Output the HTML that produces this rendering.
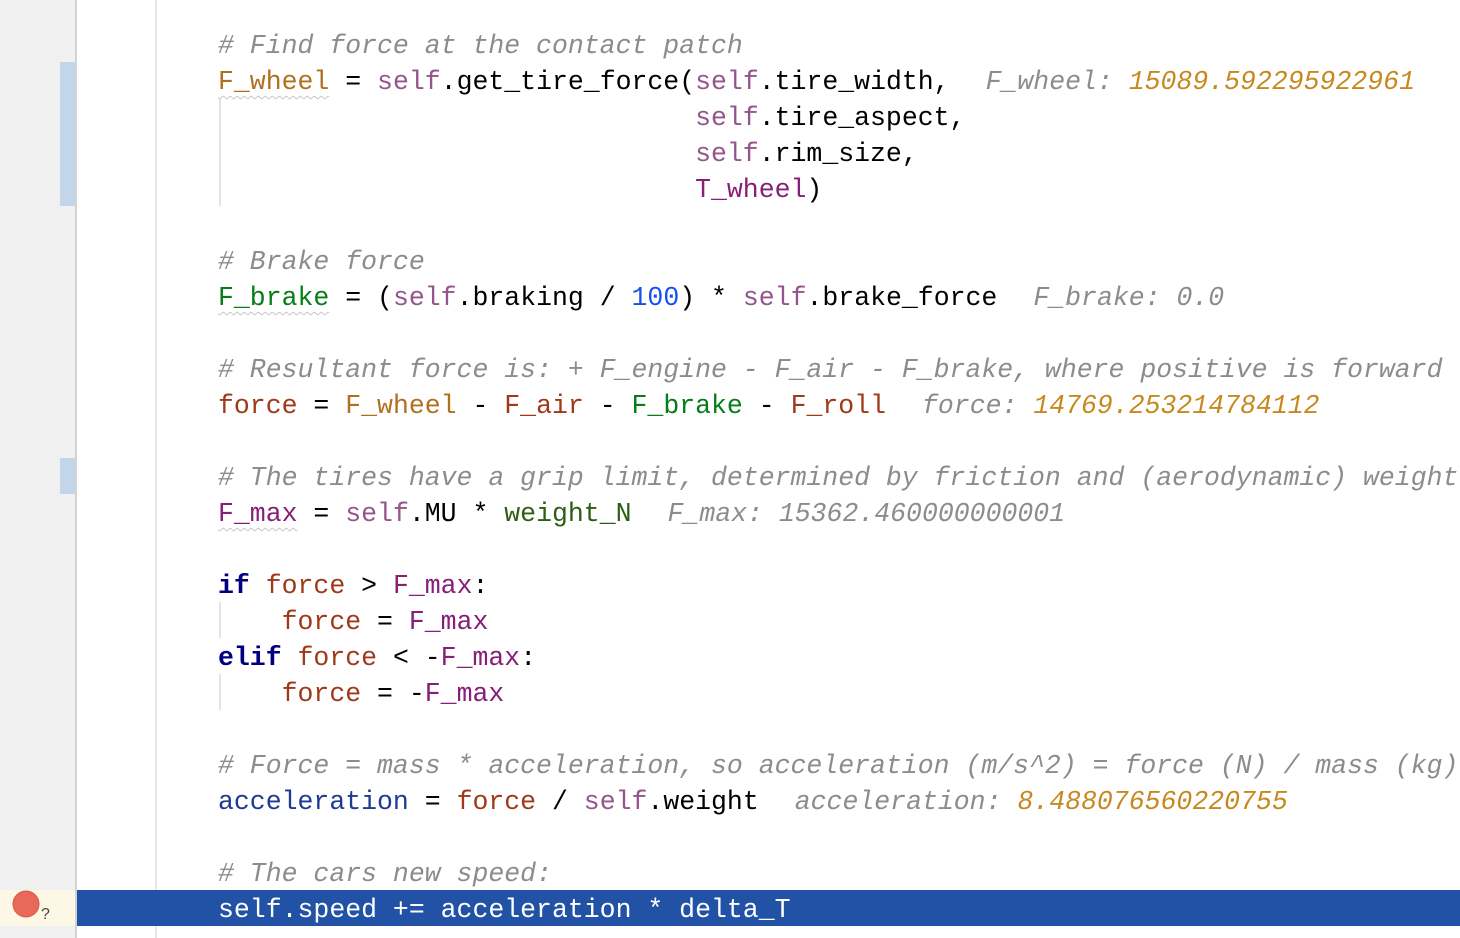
<!DOCTYPE html>
<html><head><meta charset="utf-8"><style>
html,body{margin:0;padding:0;width:1460px;height:938px;overflow:hidden;background:#fff;}
.gut{position:absolute;left:0;top:0;width:75px;height:938px;background:#f0f0f0;border-right:2px solid #d3d3d3;}
.sep{position:absolute;left:155px;top:0;width:2px;height:938px;background:#e8e8e8;}
.mk{position:absolute;left:60px;width:15px;background:#c3d5e8;}
.hl{position:absolute;left:77px;top:890px;width:1383px;height:36px;background:#2152a5;}
.hlg{position:absolute;left:0;top:890px;width:75px;height:36px;background:#fdf8e6;}
.code{position:absolute;left:218px;top:28px;font-family:"Liberation Mono",monospace;font-size:26.5px;line-height:36px;color:#000;}
.l{height:36px;white-space:pre;}
.c{color:#8c8c8c;font-style:italic;}
.s{color:#94558d;}
.fw{color:#b0701f;}
.fb{color:#067d17;}
.fo{color:#a0391a;}
.fm{color:#871f78;}
.k{color:#000080;font-weight:bold;}
.n{color:#1750eb;}
.ac{color:#1f3a93;}
.wn{color:#2e5d14;}
.w{text-decoration:underline wavy #c8c8c8;text-decoration-thickness:1px;text-underline-offset:6px;}
.h{color:#8c8c8c;font-style:italic;margin-left:36px;}
.hv{color:#c7891f;}
.g{position:absolute;left:219px;width:2px;background:#e4e4e4;}
</style></head><body>
<div class="gut"></div>
<div class="mk" style="top:62px;height:144px"></div>
<div class="mk" style="top:458px;height:36px"></div>
<div class="sep"></div>
<div class="hlg"></div>
<div class="hl"></div>
<div class="g" style="top:98px;height:108px"></div>
<div class="g" style="top:602px;height:36px"></div>
<div class="g" style="top:674px;height:36px"></div>
<svg style="position:absolute;left:8px;top:888px" width="44" height="40"><circle cx="18" cy="16" r="13" fill="#e8685a" stroke="#d9574a" stroke-width="1"/><text x="33" y="31" font-family="Liberation Sans,sans-serif" font-size="16" fill="#444">?</text></svg>
<div class="code"><div class="l c"># Find force at the contact patch</div><div class="l"><span class="fw w">F_wheel</span> = <span class="s">self</span>.get_tire_force(<span class="s">self</span>.tire_width,<span class="h">F_wheel: <span class="hv">15089.592295922961</span></span></div><div class="l">                              <span class="s">self</span>.tire_aspect,</div><div class="l">                              <span class="s">self</span>.rim_size,</div><div class="l">                              <span class="fm">T_wheel</span>)</div><div class="l"> </div><div class="l c"># Brake force</div><div class="l"><span class="fb w">F_brake</span> = (<span class="s">self</span>.braking / <span class="n">100</span>) * <span class="s">self</span>.brake_force<span class="h">F_brake: 0.0</span></div><div class="l"> </div><div class="l c"># Resultant force is: + F_engine - F_air - F_brake, where positive is forward</div><div class="l"><span class="fo">force</span> = <span class="fw">F_wheel</span> - <span class="fo">F_air</span> - <span class="fb">F_brake</span> - <span class="fo">F_roll</span><span class="h">force: <span class="hv">14769.253214784112</span></span></div><div class="l"> </div><div class="l c"># The tires have a grip limit, determined by friction and (aerodynamic) weight</div><div class="l"><span class="fm w">F_max</span> = <span class="s">self</span>.MU * <span class="wn">weight_N</span><span class="h">F_max: 15362.460000000001</span></div><div class="l"> </div><div class="l"><span class="k">if</span> <span class="fo">force</span> &gt; <span class="fm">F_max</span>:</div><div class="l">    <span class="fo">force</span> = <span class="fm">F_max</span></div><div class="l"><span class="k">elif</span> <span class="fo">force</span> &lt; -<span class="fm">F_max</span>:</div><div class="l">    <span class="fo">force</span> = -<span class="fm">F_max</span></div><div class="l"> </div><div class="l c"># Force = mass * acceleration, so acceleration (m/s^2) = force (N) / mass (kg)</div><div class="l"><span class="ac">acceleration</span> = <span class="fo">force</span> / <span class="s">self</span>.weight<span class="h">acceleration: <span class="hv">8.488076560220755</span></span></div><div class="l"> </div><div class="l c"># The cars new speed:</div><div class="l" style="color:#fff">self.speed += acceleration * delta_T</div></div>
</body></html>
